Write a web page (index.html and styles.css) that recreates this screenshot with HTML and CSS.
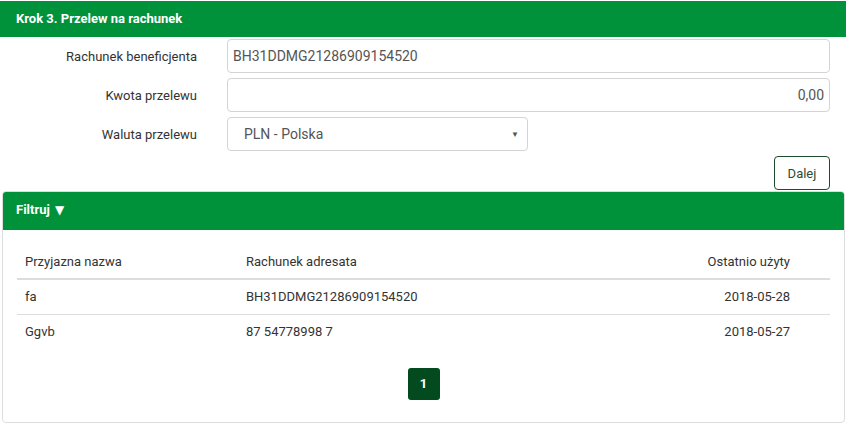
FILE: index.html
```html
<!DOCTYPE html>
<html lang="pl">
<head>
<meta charset="utf-8">
<title>Przelew na rachunek</title>
<link rel="stylesheet" href="styles.css">
</head>
<body>
<section class="step">
  <header class="step-head">Krok 3. Przelew na rachunek</header>
  <form class="form">
    <div class="row">
      <label class="label">Rachunek beneficjenta</label>
      <div class="input">BH31DDMG21286909154520</div>
    </div>
    <div class="row">
      <label class="label">Kwota przelewu</label>
      <div class="input right">0,00</div>
    </div>
    <div class="row">
      <label class="label">Waluta przelewu</label>
      <div class="select"><span>PLN - Polska</span><span class="caret">▼</span></div>
    </div>
    <div class="actions">
      <button type="button" class="btn">Dalej</button>
    </div>
  </form>
</section>
<section class="panel">
  <header class="panel-head">Filtruj <span class="tri">▼</span></header>
  <div class="panel-body">
    <table class="tbl">
      <thead>
        <tr><th class="c1">Przyjazna nazwa</th><th class="c2">Rachunek adresata</th><th class="c3">Ostatnio użyty</th></tr>
      </thead>
      <tbody>
        <tr><td class="c1">fa</td><td class="c2">BH31DDMG21286909154520</td><td class="c3">2018-05-28</td></tr>
        <tr><td class="c1">Ggvb</td><td class="c2">87 54778998 7</td><td class="c3">2018-05-27</td></tr>
      </tbody>
    </table>
    <nav class="pager"><span class="page">1</span></nav>
  </div>
</section>
</body>
</html>
```
FILE: styles.css
```css
* { box-sizing: border-box; }
html, body { margin: 0; padding: 0; background: #fff; }
body {
  font-family: Roboto, "Noto Sans", "Liberation Sans", sans-serif;
  font-size: 13px;
  color: #333;
  width: 848px;
}
.step { padding-top: 1px; }
.step-head {
  height: 36px;
  line-height: 36px;
  background: #00923a;
  color: #fff;
  font-weight: 700;
  font-size: 13px;
  padding-left: 16px;
  margin-right: 2px;
}
.form { padding: 2px 18px 0 0; }
.row {
  display: flex;
  align-items: center;
  margin-bottom: 5px;
}
.label {
  width: 197px;
  text-align: right;
  font-weight: 400;
  color: #333;
  margin-right: 30px;
  flex: none;
}
.input {
  flex: 1;
  height: 34px;
  line-height: 32px;
  border: 1px solid #d4d4d4;
  border-radius: 4px;
  padding: 0 5px;
  font-size: 14px;
  color: #555;
}
.input.right { text-align: right; }
.select {
  width: 301px;
  height: 34px;
  border: 1px solid #d4d4d4;
  border-radius: 4px;
  display: flex;
  align-items: center;
  justify-content: space-between;
  padding: 0 8px 0 16px;
  font-size: 14px;
  color: #555;
}
.caret { font-size: 8px; color: #555; }
.actions {
  display: flex;
  justify-content: flex-end;
}
.btn {
  width: 56px;
  height: 34px;
  border: 1px solid #1d4a2a;
  border-radius: 4px;
  background: #fff;
  color: #2c4a35;
  font-family: inherit;
  font-size: 13px;
  padding: 0;
}
.panel {
  margin: 1px 3px 0 2px;
  border: 1px solid #ddd;
  border-radius: 4px;
  height: 232px;
  overflow: hidden;
}
.panel-head {
  height: 39px;
  line-height: 38px;
  background: #00923a;
  color: #fff;
  font-weight: 700;
  padding-left: 14px;
  margin: -1px -1px 0 -1px;
  border-radius: 4px 4px 0 0;
}
.tri {
  font-family: "DejaVu Sans", sans-serif;
  font-size: 12px;
  font-weight: 400;
  margin-left: 2px;
}
.panel-body { padding: 15px 14px 0 14px; }
.tbl {
  width: 100%;
  border-collapse: collapse;
}
.tbl th, .tbl td {
  padding: 0 8px;
  text-align: left;
  font-weight: 400;
  color: #333;
}
.tbl th { height: 34px; border-bottom: 2px solid #ddd; }
.tbl td { height: 35px; }
.tbl tbody tr + tr td { border-top: 1px solid #ddd; }
.tbl .c1 { width: 221px; }
.tbl .c3 { text-align: right; padding-right: 40px; }
.pager {
  display: flex;
  justify-content: center;
  margin-top: 19px;
}
.page {
  width: 32px;
  height: 32px;
  line-height: 32px;
  text-align: center;
  background: #034b1f;
  color: #fff;
  font-weight: 700;
  border-radius: 3px;
}
```
